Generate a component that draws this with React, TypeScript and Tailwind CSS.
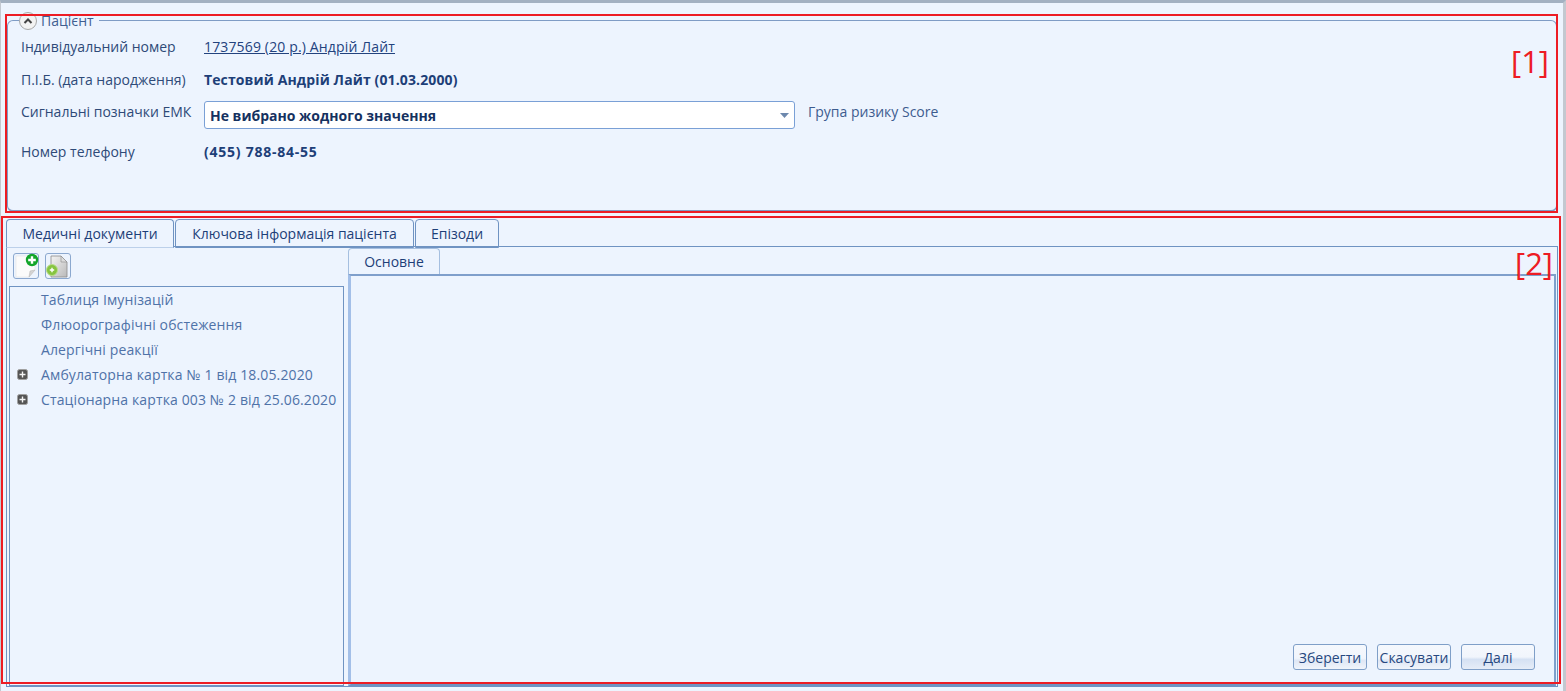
import React from "react";

const font = { fontFamily: '"Open Sans", "Noto Sans", sans-serif' };

function NewDocIcon() {
  return (
    <svg width="26" height="26" viewBox="0 0 26 26" className="shrink-0">
      <path d="M3 3h19v14l-6 7H3z" fill="#fbfbfb" stroke="#e4e4e4" strokeWidth="0.6" />
      <path d="M16 24l1-6 5-1z" fill="#d4d4d4" stroke="#b5b5b5" strokeWidth="0.5" />
      <circle cx="19" cy="7" r="6.2" fill="#12a52a" />
      <path d="M19 3.2v7.6M15.2 7h7.6" stroke="#fff" strokeWidth="2.4" />
    </svg>
  );
}

function ImportDocIcon() {
  return (
    <svg width="26" height="26" viewBox="0 0 26 26" className="shrink-0">
      <defs>
        <linearGradient id="page" x1="0" y1="0" x2="1" y2="1">
          <stop offset="0" stopColor="#f4f4f4" />
          <stop offset="1" stopColor="#b9b9b9" />
        </linearGradient>
      </defs>
      <path d="M6 3h10l6 6v15H6z" fill="url(#page)" stroke="#8b8b8b" strokeWidth="0.8" />
      <path d="M16 3v6h6z" fill="#dcdcdc" stroke="#8b8b8b" strokeWidth="0.6" />
      <circle cx="7" cy="17" r="5.5" fill="#86c440" stroke="#b8dd8c" />
      <path d="M7 14.8v4.4M4.8 17h4.4" stroke="#fff" strokeWidth="1.4" />
    </svg>
  );
}

function Expander() {
  return (
    <svg width="11" height="11" viewBox="0 0 11 11" className="shrink-0">
      <rect x="0.5" y="0.5" width="10" height="10" rx="2" fill="#555" stroke="#a0a0a0" />
      <path d="M5.5 2.5v6M2.5 5.5h6" stroke="#f4f4f4" strokeWidth="1.4" />
    </svg>
  );
}

function Row({ label, className, children }: { label: string; className: string; children: React.ReactNode }) {
  return (
    <div className={`flex items-center ${className}`}>
      <div className="w-[183px] shrink-0 text-[#2e4a78]">{label}</div>
      {children}
    </div>
  );
}

function TreeItem({ text, expand }: { text: string; expand?: boolean }) {
  return (
    <div className="flex h-[25px] items-center text-[#4f72a8]">
      <div className="flex w-[31px] shrink-0 justify-start pl-[7px]">{expand && <Expander />}</div>
      <span className="whitespace-nowrap tracking-[0.13px]">{text}</span>
    </div>
  );
}

function Tab({ text, active, w }: { text: string; active?: boolean; w: string }) {
  return (
    <div
      className={`relative flex h-[29px] items-center justify-center rounded-t-[4px] border border-[#6f93c2] text-[#1d3f78] ${w} ${
        active ? "z-10 border-b-[#bcd0ea] bg-[#edf4fe]" : ""
      }`}
    >
      {text}
    </div>
  );
}

function Btn({ text, strong }: { text: string; strong?: boolean }) {
  return (
    <div
      className={`flex h-[26px] w-[74px] items-center justify-center rounded-[3px] border border-[#7f9fc8] text-[#27487f] ${
        strong
          ? "bg-[linear-gradient(#f5f8fd_0%,#f1f5fc_50%,#d5e1f3_60%,#e6edf8_100%)]"
          : "bg-[linear-gradient(#f5f8fd_0%,#f1f5fc_55%,#dfe7f5_65%,#f0f4fb_100%)]"
      }`}
    >
      {text}
    </div>
  );
}

export default function App() {
  return (
    <div
      style={font}
      className="relative flex h-[691px] w-[1566px] flex-col overflow-hidden border-t-[3px] border-r-[3px] border-l border-t-[#a3b1c2] border-r-[#c3c8d0] border-l-[#c3c8d0] bg-[#edf4fe] text-[14px] leading-[19px]"
    >
      {/* Patient group */}
      <fieldset className="mx-[6px] mt-[8px] h-[201px] w-[1550px] shrink-0 rounded-[6px] border border-b-2 border-[#7f9cc5] px-[13px]">
        <legend className="ml-[-2px] flex h-[19px] items-center gap-[4px] pr-[5px] text-[#3f5f91]">
          <span className="flex h-[18px] w-[18px] items-center justify-center rounded-full border border-[#a8a8a8] bg-[#f3f3f3]">
            <svg width="10" height="8" viewBox="0 0 10 8">
              <path d="M1.5 6l3.5-3.5L8.5 6" fill="none" stroke="#444" strokeWidth="2" />
            </svg>
          </span>
          Пацієнт
        </legend>
        <div className="mt-[4px] flex flex-col">
          <Row label="Індивідуальний номер" className="h-[24px]">
            <a className="tracking-[0.15px] text-[#23437e] underline">1737569 (20 р.) Андрій Лайт</a>
          </Row>
          <Row label="П.І.Б. (дата народження)" className="mt-[9px] h-[24px]">
            <span className="font-bold tracking-[0.12px] text-[#1d3f78]">Тестовий Андрій Лайт (01.03.2000)</span>
          </Row>
          <div className="mt-[10px] flex h-[28px] items-center">
            <div className="mt-[-8px] w-[183px] shrink-0 text-[#2e4a78]">Сигнальні позначки ЕМК</div>
            <div className="flex h-[28px] w-[591px] items-center justify-between rounded-[3px] border border-[#7aa0d6] bg-white pr-[5px] pl-[5px] font-bold text-[#15315f]">
              Не вибрано жодного значення
              <svg width="9" height="5" viewBox="0 0 9 5">
                <path d="M0 0h9L4.5 5z" fill="#6d88ad" />
              </svg>
            </div>
            <div className="mt-[-8px] ml-[13px] text-[#3d5c8f]">Група ризику Score</div>
          </div>
          <Row label="Номер телефону" className="mt-[10px] h-[24px]">
            <span className="font-bold tracking-[0.75px] text-[#1d3f78]">(455) 788-84-55</span>
          </Row>
        </div>
      </fieldset>

      {/* Tabs */}
      <div className="mt-[7px] ml-[5px] flex shrink-0 gap-[1px]">
        <Tab text="Медичні документи" active w="w-[168px]" />
        <Tab text="Ключова інформація пацієнта" w="w-[239px]" />
        <Tab text="Епізоди" w="w-[84px]" />
      </div>

      {/* Tab body */}
      <div className="mt-[-2px] ml-[5px] flex h-[441px] w-[1552px] border border-[#6f93c2] pr-[1px] pl-[2px]">
        <div className="mr-[4px] flex w-[335px] shrink-0 flex-col">
          <div className="flex h-[39px] items-start gap-[6px] pt-[6px] pl-[4px]">
            <div className="flex h-[26px] w-[26px] items-center justify-center rounded-[3px] border border-[#8ba8cf]">
              <NewDocIcon />
            </div>
            <div className="flex h-[26px] w-[26px] items-center justify-center rounded-[3px] border border-[#8ba8cf]">
              <ImportDocIcon />
            </div>
          </div>
          <div className="flex-1 border border-[#6f93c2]">
            <TreeItem text="Таблиця Імунізацій" />
            <TreeItem text="Флюорографічні обстеження" />
            <TreeItem text="Алергічні реакції" />
            <TreeItem text="Амбулаторна картка № 1 від 18.05.2020" expand />
            <TreeItem text="Стаціонарна картка 003 № 2 від 25.06.2020" expand />
          </div>
        </div>
        <div className="flex min-w-0 flex-1 flex-col pt-[1px]">
          <div className="flex h-[26px] w-[92px] items-center justify-center rounded-t-[4px] border border-b-0 border-[#a5bfe0] text-[#1d3f78]">
            Основне
          </div>
          <div className="flex flex-1 items-end justify-end gap-[10px] border-t-2 border-r-2 border-b-2 border-l-[3px] border-t-[#7f9fcb] border-r-[#7f9fcb] border-b-[#6f93c2] border-l-[#a3bfe8] pr-[19px] pb-[14px]">
            <Btn text="Зберегти" />
            <Btn text="Скасувати" />
            <Btn text="Далі" strong />
          </div>
        </div>
      </div>

      {/* Red annotation overlays */}
      <div className="pointer-events-none absolute top-[11px] left-[4px] h-[199px] w-[1553px] border-2 border-[#ed1c24]" />
      <div className="pointer-events-none absolute top-[213px] left-0 h-[468px] w-[1560px] border-2 border-[#ed1c24]" />
      <div className="pointer-events-none absolute top-[36px] left-[1510px] text-[31px] leading-[44px] text-[#ed1c24]">[1]</div>
      <div className="pointer-events-none absolute top-[238px] left-[1514px] text-[31px] leading-[44px] text-[#ed1c24]">[2]</div>
    </div>
  );
}
